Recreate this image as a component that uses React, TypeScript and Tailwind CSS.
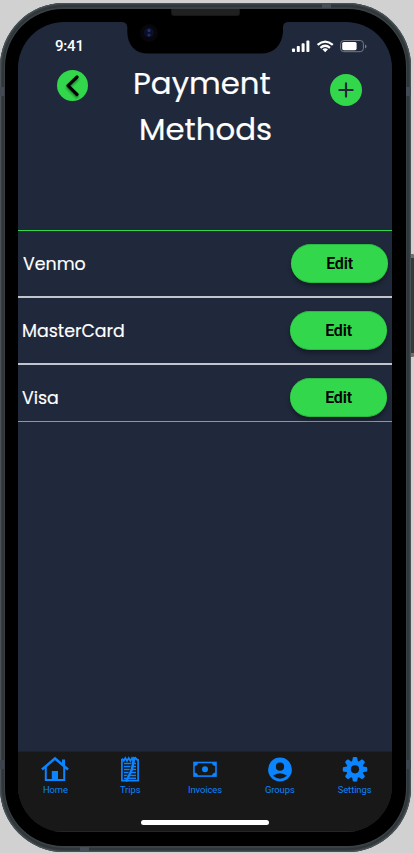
import React from "react";

const poppins = "font-['Poppins','Inter',sans-serif] [font-feature-settings:'cv11']";

function StatusIcons() {
  return (
    <svg width="76" height="16" viewBox="0 0 76 16" fill="#fff">
      <rect x="1" y="9.400" width="3" height="3.600" rx="0.8" />
      <rect x="5.800" y="7" width="3" height="6" rx="0.8" />
      <rect x="10.600" y="4.300" width="3" height="8.700" rx="0.8" />
      <rect x="15.400" y="1.600" width="3" height="11.400" rx="0.8" />
      <g fill="none" stroke="#fff" strokeWidth="2.2">
        <path d="M26.600 5.900Q34.200-.6 41.800 5.900" />
        <path d="M29.400 8.800Q34.200 4.700 39 8.800" />
      </g>
      <path d="M31.400 10.300Q34.200 8.300 37 10.300L34.200 13.200Z" />
      <rect x="49.600" y="1.500" width="22.800" height="11.200" rx="3.200" fill="none" stroke="#747b87" />
      <rect x="51.200" y="3" width="14.400" height="8.200" rx="1.600" />
      <path d="M74 5.500v4q1.500-.6 1.500-2T74 5.500Z" fill="#747b87" />
    </svg>
  );
}

function Notch() {
  return (
    <svg className="absolute left-[86px] top-[-4px]" width="184" height="37" viewBox="0 0 184 37">
      <path d="M0 0H184V4Q179 4.300 179 9V14C178 27 170 35.600 157 35.600H44C32 35.600 23.500 28 23.300 14V9Q23 4.300 18 4H0Z" fill="#000" />
      <circle cx="45" cy="15" r="9" fill="#07070b" />
      <circle cx="45" cy="14.500" r="5" fill="#0b0f2b" />
      <circle cx="45" cy="12.500" r="1.500" fill="#273568" />
      <circle cx="45" cy="17" r="1.500" fill="#20316a" />
    </svg>
  );
}

const methods = [
  { name: "Venmo", row: "h-[67px] border-b-2 pl-[5px] pr-[4px]" },
  { name: "MasterCard", row: "h-[67px] border-b-2 pl-[4px] pr-[5px]" },
  { name: "Visa", row: "h-[56px] pl-[4px] pr-[5px]" },
];

function HomeIcon() {
  return (
    <svg width="28" height="26" viewBox="0 0 28 26" fill="none" stroke="#0a84ff" strokeWidth="2">
      <path d="M1 13.500 14 2.500 27 13.500" strokeWidth="2.500" />
      <path d="M4.800 11V24H23.200V11" />
      <path d="M10.800 15h6.200v9h-6.200Z" fill="#0a84ff" stroke="none" />
      <path d="M22.500 3.500V10" strokeWidth="3" />
    </svg>
  );
}

function TripsIcon() {
  return (
    <svg width="20" height="26" viewBox="0 0 20 26" fill="none" stroke="#0a84ff">
      <path d="M1.900 3V24.600H18.100V3" strokeWidth="1.700" />
      <path d="M2 2.500 3.700 4.900 5.300 2 7 4.900 8.700 2 10.400 4.900 12 2 13.600 4.900 15.400 2 18 4.500" strokeWidth="1.800" />
      <path d="M4 7.500H16M4 10.500H16M4 13.500H16M4 16.500H16M4 19.500H16M4 22.300H16" strokeWidth="1.500" />
      <path d="M14.300 1 12 13 6 25.500" strokeWidth="2.600" />
      <path d="M11.500 7 9.500 15 6 22" stroke="#181818" strokeWidth=".6" />
    </svg>
  );
}

function InvoicesIcon() {
  return (
    <svg width="24" height="26" viewBox="0 0 24 26" fill="none" stroke="#0a84ff" strokeWidth="1.600">
      <rect x="1" y="6.500" width="22" height="13.600" />
      <path d="M1 6.500H5Q5 10 1 10ZM23 6.500H19Q19 10 23 10ZM1 20.100H5Q5 16.600 1 16.600ZM23 20.100H19Q19 16.600 23 16.600Z" fill="#0a84ff" stroke="none" />
      <circle cx="12" cy="13.300" r="3" fill="#0a84ff" stroke="none" />
    </svg>
  );
}

function GroupsIcon() {
  return (
    <svg width="24" height="26" viewBox="0 0 24 26">
      <circle cx="12" cy="13.500" r="11.900" fill="#0a84ff" />
      <circle cx="12" cy="10.700" r="4.100" fill="#181818" />
      <path d="M4.900 19.800Q12 14.800 19.100 19.800Q12 25.500 4.900 19.800Z" fill="#181818" />
    </svg>
  );
}

function SettingsIcon() {
  return (
    <svg width="26" height="26" viewBox="0 0 26 26" fill="#0a84ff">
      {[0, 45, 90, 135].map((angle) => (
        <path key={angle} transform={`rotate(${angle} 13 13.300)`} d="M10.900 1.300Q13 .6 15.100 1.300L16.300 7.300V19.300L15.100 25.300Q13 26 10.900 25.300L9.700 19.300V7.300Z" />
      ))}
      <circle cx="13" cy="13.300" r="8.600" />
      <circle cx="13" cy="13.300" r="4.100" fill="#181818" />
    </svg>
  );
}

const tabs = [
  { label: "Home", icon: <HomeIcon /> },
  { label: "Trips", icon: <TripsIcon /> },
  { label: "Invoices", icon: <InvoicesIcon /> },
  { label: "Groups", icon: <GroupsIcon /> },
  { label: "Settings", icon: <SettingsIcon /> },
];

export default function App() {
  return (
    <div className="relative h-[853px] w-[414px] overflow-hidden bg-[#d1d1d1] pt-[3px]">
      <div className="absolute left-[409px] top-[254px] h-[103px] w-[5px] rounded-[1px] border-y-4 border-[#6c7174] bg-[#343a3d]" />
      <div className="relative h-[849px] w-[411px] rounded-[64px] bg-[#3a4145] px-[5px] pb-[6px] pt-[6px] shadow-[inset_0_0_2px_1px_#555d62,inset_0_0_0_4px_#2f3639]">
        <div className="absolute left-0 top-[84px] h-[9px] w-[4px] bg-[#444a54]" />
        <div className="absolute left-0 top-[757px] h-[9px] w-[4px] bg-[#3e444e]" />
        <div className="absolute right-0 top-[84px] h-[9px] w-[5px] bg-[#444a54]" />
        <div className="absolute right-0 top-[757px] h-[9px] w-[5px] bg-[#3e444e]" />
        <div className="absolute left-[322px] top-0 h-[5px] w-[9px] bg-[#484e58]" />
        <div className="absolute bottom-0 left-[80px] h-[5px] w-[9px] bg-[#484e58]" />
        <div className="relative h-full rounded-[58px] bg-black pl-[13px] pr-[14px] pt-[13px]">
          <div className="absolute left-[166px] top-0 h-[7px] w-[69px] rounded-b-[3px] border border-t-0 border-[#171717] bg-[#202020]" />
          <div className="relative flex h-[810px] w-[374px] flex-col overflow-hidden rounded-[46px] bg-[#1f293b]">
            <Notch />
            <div className="flex h-[48px] items-start justify-between pl-[37px] pr-[25px] pt-[17px]">
              <span className="mt-[-1px] font-[Roboto,sans-serif] text-[15px] font-medium leading-[16px] tracking-[-0.2px] text-white">9:41</span>
              <StatusIcons />
            </div>
            <header className="flex h-[160px] items-start pl-[39px]">
              <button className="flex h-[31px] w-[31px] items-center justify-center rounded-full bg-[#32d74b]">
                <svg className="drop-shadow-[0_2px_1px_#0006]" width="31" height="31" viewBox="0 0 31 31" fill="none" stroke="#000" strokeWidth="3.200" strokeLinecap="round" strokeLinejoin="round">
                  <path d="M20 7 11 15.700 20 24.500" />
                </svg>
              </button>
              <h1 className={`ml-[45px] mt-[-9px] w-[148px] whitespace-nowrap text-[30.8px] font-normal leading-[46px] text-white [-webkit-text-stroke:0.2px_#fff] ${poppins}`}>
                <span className="block">Payment</span>
                <span className="block pl-[6px]">Methods</span>
              </h1>
              <button className="ml-[49px] mt-[4px] flex h-[32px] w-[32px] items-center justify-center rounded-full bg-[#32d74b]">
                <svg width="16" height="16" viewBox="0 0 16 16" fill="none" stroke="#1f293b" strokeWidth="2.200" strokeLinecap="round">
                  <path d="M8 1.400V14.600M1.400 8H14.600" />
                </svg>
              </button>
            </header>
            <main className="h-[192px] border-y border-[#32d74b]">
              {methods.map((method) => (
                <div key={method.name} className={`flex items-start justify-between border-[#c4c4cc] pt-[13px] ${method.row}`}>
                  <span className={`pt-[7px] text-[17.4px] leading-[26px] text-white [-webkit-text-stroke:0.15px_#fff] ${poppins}`}>{method.name}</span>
                  <button className="h-[39px] w-[97px] rounded-[20px] border-y border-[#29b941] bg-[#32d74b] pt-[1px] font-[Roboto,sans-serif] text-[16px] font-semibold leading-[20px] tracking-[-0.2px] text-black shadow-[0_3px_4px_#0005]">Edit</button>
                </div>
              ))}
            </main>
            <div className="flex-1" />
            <nav className="h-[81px] border-y border-t-[#1c222d] border-b-[#26262a] bg-[#181818]">
              <div className="grid h-[68px] grid-cols-5 pt-[4px]">
                {tabs.map((tab) => (
                  <div key={tab.label} className="flex flex-col items-center">
                    {tab.icon}
                    <span className="mt-[2px] font-[Roboto,sans-serif] text-[9.4px] leading-[12px] tracking-[-0.05px] text-[#0a84ff]">{tab.label}</span>
                  </div>
                ))}
              </div>
              <div className="mx-auto h-[5px] w-[128px] rounded-full bg-white" />
            </nav>
          </div>
        </div>
      </div>
    </div>
  );
}
